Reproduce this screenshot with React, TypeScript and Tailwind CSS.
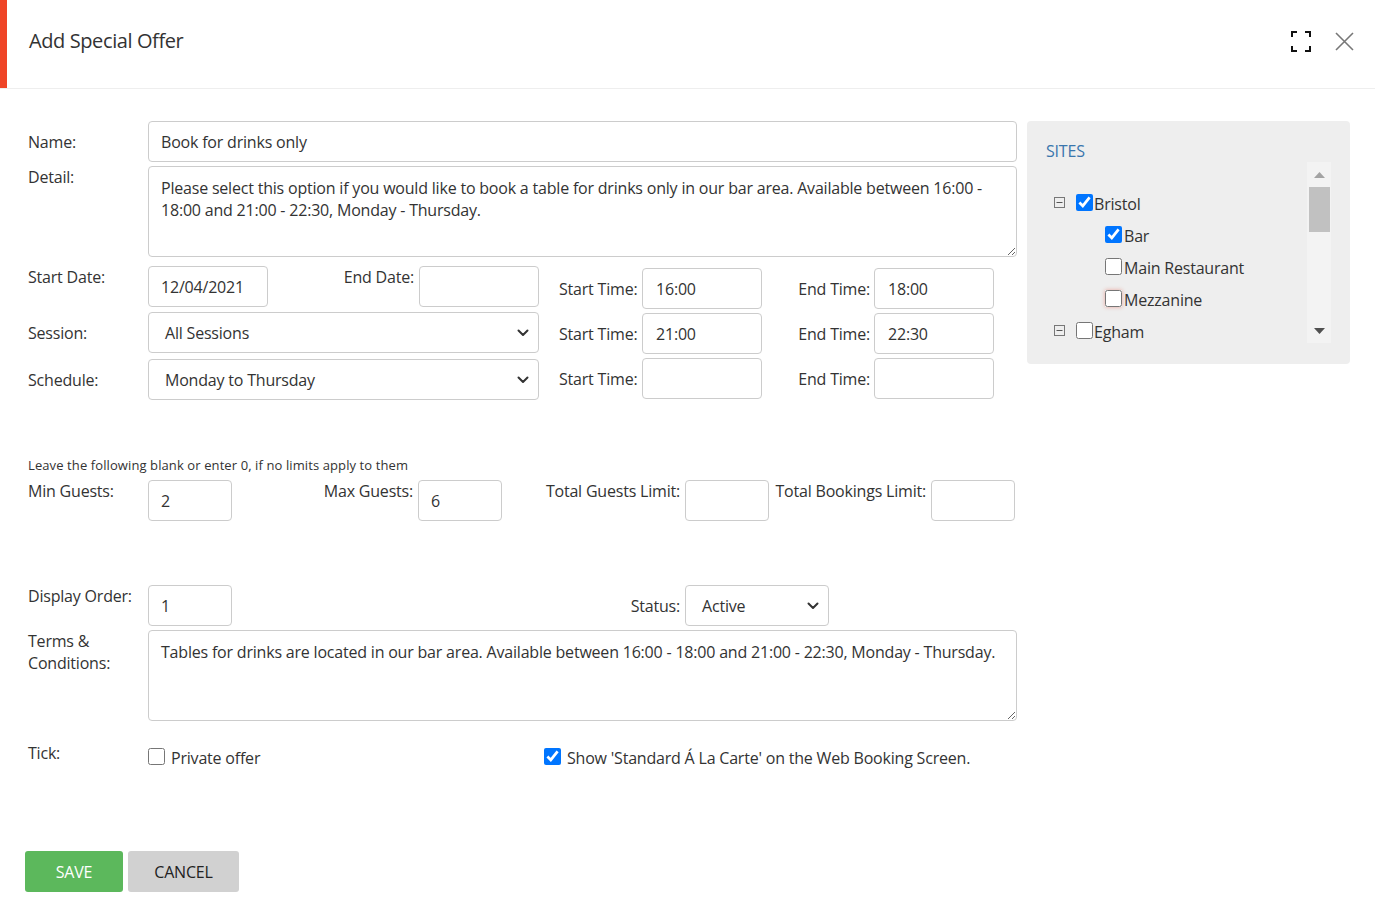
import React from "react";

const inputCls =
  "h-[41px] border border-[#cccccc] rounded-[4px] bg-white flex items-center text-[#333] text-[16px] leading-[22px]";

function Input({ w, value, pl = "pl-[12px]" }: { w: string; value?: string; pl?: string }) {
  return <div className={`${inputCls} ${w} ${pl}`}>{value}</div>;
}

function Chevron() {
  return (
    <svg width="12" height="8" viewBox="0 0 12 8" className="shrink-0">
      <path d="M1.5 1.5 L6 6 L10.5 1.5" fill="none" stroke="#333" strokeWidth="2" strokeLinecap="round" strokeLinejoin="round" />
    </svg>
  );
}

function Select({ w, value }: { w: string; value: string }) {
  return (
    <div className={`${inputCls} ${w} pl-[16px] pr-[9px] justify-between`}>
      <span>{value}</span>
      <Chevron />
    </div>
  );
}

function MinusBox() {
  return (
    <svg width="11" height="11" viewBox="0 0 11 11" className="shrink-0">
      <rect x="0.5" y="0.5" width="10" height="10" fill="none" stroke="#777" strokeWidth="1" />
      <path d="M2.5 5.5 H8.5" stroke="#555" strokeWidth="1" />
    </svg>
  );
}

function Check({ checked, glow }: { checked?: boolean; glow?: boolean }) {
  return (
    <input
      type="checkbox"
      defaultChecked={checked}
      className={`m-0 w-[17px] h-[17px] shrink-0 ${glow ? "shadow-[0_0_4px_rgba(230,80,60,0.45)] rounded-[3px]" : ""}`}
    />
  );
}

export default function App() {
  return (
    <div className="w-[1375px] h-[898px] bg-white overflow-hidden font-['Open_Sans',sans-serif] text-[#333] tracking-[-0.2px]">
      {/* Header */}
      <div className="h-[89px] flex items-stretch border-b border-[#eeeeee]">
        <div className="w-[7px] bg-[#ef4527]" />
        <div className="flex-1 flex items-center pl-[22px] pb-[6px]">
          <span className="text-[20px] leading-[28px] text-[#333] tracking-[-0.4px]">Add Special Offer</span>
        </div>
        <div className="flex items-center gap-[24px] pr-[21px] pb-[6px]">
          <svg width="20" height="21" viewBox="0 0 20 21">
            <path d="M1 6 V1 H6 M14 1 H19 V6 M19 15 V20 H14 M6 20 H1 V15" fill="none" stroke="#111" strokeWidth="2" />
          </svg>
          <svg width="19" height="19" viewBox="0 0 19 19">
            <path d="M1 1 L18 18 M18 1 L1 18" fill="none" stroke="#777" strokeWidth="1.6" />
          </svg>
        </div>
      </div>

      {/* Body */}
      <div className="flex pl-[28px] pt-[32px] pr-[25px]">
        {/* Form column */}
        <div className="w-[989px] flex flex-col text-[16px] leading-[22px]">
          {/* Name */}
          <div className="flex items-center">
            <div className="w-[120px]">Name:</div>
            <Input w="w-[869px]" value="Book for drinks only" />
          </div>
          {/* Detail */}
          <div className="flex items-start mt-[4px]">
            <div className="w-[120px]">Detail:</div>
            <textarea
              readOnly
              defaultValue="Please select this option if you would like to book a table for drinks only in our bar area. Available between 16:00 - 18:00 and 21:00 - 22:30, Monday - Thursday."
              className="w-[869px] h-[91px] border border-[#cccccc] rounded-[4px] px-[12px] py-[10px] text-[16px] leading-[22px] tracking-[-0.2px] text-[#333] outline-none"
            />
          </div>

          {/* Date / Session / Schedule + Times */}
          <div className="flex mt-[9px]">
            <div className="w-[511px] flex flex-col">
              <div className="flex items-start">
                <div className="w-[120px]">Start Date:</div>
                <Input w="w-[120px]" value="12/04/2021" />
                <div className="flex-1 text-right pr-[5px]">End Date:</div>
                <Input w="w-[120px]" />
              </div>
              <div className="flex items-center mt-[5px]">
                <div className="w-[120px]">Session:</div>
                <Select w="w-[391px]" value="All Sessions" />
              </div>
              <div className="flex items-center mt-[6px]">
                <div className="w-[120px]">Schedule:</div>
                <Select w="w-[391px]" value="Monday to Thursday" />
              </div>
            </div>
            <div className="ml-[20px] mt-[2px] flex flex-col gap-[4px]">
              {[
                ["16:00", "18:00"],
                ["21:00", "22:30"],
                ["", ""],
              ].map(([s, e], i) => (
                <div key={i} className="flex items-center">
                  <div className="w-[83px]">Start Time:</div>
                  <Input w="w-[120px]" value={s} pl="pl-[13px]" />
                  <div className="w-[112px] text-right pr-[4px]">End Time:</div>
                  <Input w="w-[120px]" value={e} pl="pl-[13px]" />
                </div>
              ))}
            </div>
          </div>

          {/* Helper */}
          <div className="mt-[56px] text-[13px] leading-[18px] tracking-[0.1px]">
            Leave the following blank or enter 0, if no limits apply to them
          </div>

          {/* Guests */}
          <div className="flex items-start mt-[6px]">
            <div className="w-[120px]">Min Guests:</div>
            <Input w="w-[84px]" value="2" />
            <div className="w-[186px] text-right pr-[5px]">Max Guests:</div>
            <Input w="w-[84px]" value="6" />
            <div className="w-[183px] text-right pr-[5px]">Total Guests Limit:</div>
            <Input w="w-[84px]" />
            <div className="w-[162px] text-right pr-[5px]">Total Bookings Limit:</div>
            <Input w="w-[84px]" />
          </div>

          {/* Display order / Status */}
          <div className="flex items-start mt-[64px]">
            <div className="w-[120px]">Display Order:</div>
            <Input w="w-[84px]" value="1" />
            <div className="w-[453px] text-right pr-[5px] self-center">Status:</div>
            <Select w="w-[144px]" value="Active" />
          </div>

          {/* Terms */}
          <div className="flex items-start mt-[4px]">
            <div className="w-[120px]">
              Terms &amp;
              <br />
              Conditions:
            </div>
            <textarea
              readOnly
              defaultValue="Tables for drinks are located in our bar area. Available between 16:00 - 18:00 and 21:00 - 22:30, Monday - Thursday."
              className="w-[869px] h-[91px] border border-[#cccccc] rounded-[4px] px-[12px] py-[10px] text-[16px] leading-[22px] tracking-[-0.2px] text-[#333] outline-none"
            />
          </div>

          {/* Tick */}
          <div className="flex items-start mt-[21px]">
            <div className="w-[120px]">Tick:</div>
            <div className="w-[396px] flex items-center gap-[6px] pt-[2px]">
              <Check />
              <span className="mt-[3px]">Private offer</span>
            </div>
            <div className="flex items-center gap-[6px] pt-[2px]">
              <Check checked />
              <span className="mt-[3px]">Show 'Standard Á La Carte' on the Web Booking Screen.</span>
            </div>
          </div>

          {/* Buttons */}
          <div className="flex gap-[5px] mt-[82px] ml-[-3px]">
            <div className="w-[98px] h-[41px] rounded-[3px] bg-[#5cb85c] text-white flex items-center justify-center">
              SAVE
            </div>
            <div className="w-[111px] h-[41px] rounded-[3px] bg-[#d1d1d1] text-[#222] flex items-center justify-center">
              CANCEL
            </div>
          </div>
        </div>

        {/* Sites panel */}
        <div className="ml-[10px] w-[323px] h-[243px] bg-[#eeeeee] rounded-[4px] pl-[19px] pr-[19px] pt-[19px] flex flex-col">
          <div className="text-[16px] leading-[22px] text-[#3a76ad]">SITES</div>
          <div className="flex h-[181px]">
            <div className="flex-1 pl-[8px] pt-[24px] flex flex-col text-[16px] leading-[22px] text-[#333] overflow-hidden">
              <div className="h-[32px] shrink-0 flex items-center">
                <MinusBox />
                <div className="ml-[11px] flex"><Check checked /></div>
                <span className="mt-[4px] ml-[1px]">Bristol</span>
              </div>
              <div className="h-[32px] shrink-0 flex items-center pl-[51px]">
                <Check checked />
                <span className="mt-[4px] ml-[2px]">Bar</span>
              </div>
              <div className="h-[32px] shrink-0 flex items-center pl-[51px]">
                <Check />
                <span className="mt-[4px] ml-[2px]">Main Restaurant</span>
              </div>
              <div className="h-[32px] shrink-0 flex items-center pl-[51px]">
                <Check glow />
                <span className="mt-[4px] ml-[2px]">Mezzanine</span>
              </div>
              <div className="h-[32px] shrink-0 flex items-center">
                <MinusBox />
                <div className="ml-[11px] flex"><Check /></div>
                <span className="mt-[4px] ml-[1px]">Egham</span>
              </div>
            </div>
            <div className="w-[24px] bg-[#f3f3f3] flex flex-col items-center">
              <div className="h-[25px] flex items-center justify-center">
                <svg width="11" height="6" viewBox="0 0 11 6">
                  <path d="M0 6 L5.5 0 L11 6 Z" fill="#a3a3a3" />
                </svg>
              </div>
              <div className="w-[21px] h-[45px] bg-[#c1c1c1]" />
              <div className="flex-1" />
              <div className="h-[24px] flex items-center justify-center">
                <svg width="11" height="6" viewBox="0 0 11 6">
                  <path d="M0 0 L11 0 L5.5 6 Z" fill="#505050" />
                </svg>
              </div>
            </div>
          </div>
        </div>
      </div>
    </div>
  );
}
